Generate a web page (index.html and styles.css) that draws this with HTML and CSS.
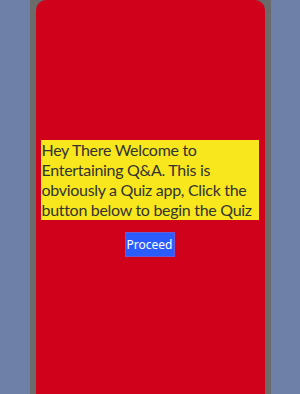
FILE: index.html
```html
<!DOCTYPE html>
<html lang="en">
<head>
    <meta charset="UTF-8">
    <meta name="viewport" content="width=device-width, initial-scale=1.0">
    <title>Entertaining Q&amp;A</title>
    <link rel="stylesheet" href="styles.css">
</head>
<body>
    <div class="frame">
        <div class="card">
            <p class="intro">Hey There Welcome to Entertaining Q&amp;A. This is obviously a Quiz app, Click the button below to begin the Quiz</p>
            <button class="proceed">Proceed</button>
        </div>
    </div>
</body>
</html>
```

FILE: styles.css
```css
* {
    box-sizing: border-box;
    margin: 0;
    padding: 0;
}
body {
    background-color: #6e7fa8;
    font-family: Lato, "Noto Sans", sans-serif;
    height: 100vh;
    overflow: hidden;
}
.frame {
    width: 241px;
    height: 100%;
    margin: 0 auto;
    padding: 0 6px;
    background-color: #6b6b6b;
}
.card {
    height: 100%;
    background-color: #d0021b;
    border-radius: 10px 10px 0 0;
    display: flex;
    flex-direction: column;
    justify-content: center;
    align-items: center;
    padding: 3px 6px 0 5px;
}
.intro {
    width: 100%;
    background-color: #f8e71c;
    color: #333;
    font-size: 16px;
    line-height: 20px;
    letter-spacing: -0.3px;
    padding-left: 1px;
}
.proceed {
    margin-top: 12px;
    width: 50px;
    height: 25px;
    background-color: #2b5cff;
    color: #fff;
    border: 1px solid #6a5ad8;
    font-family: "Noto Sans", sans-serif;
    font-size: 12px;
    cursor: pointer;
}
```
